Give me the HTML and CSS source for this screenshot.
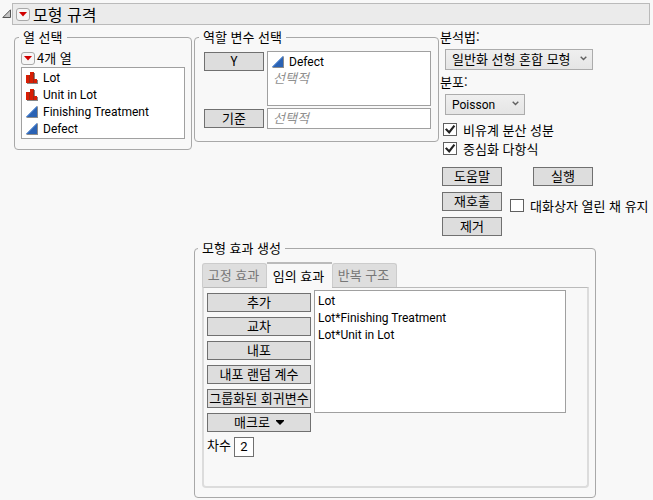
FILE: index.html
```html
<!DOCTYPE html>
<html lang="ko">
<head>
	<meta charset="UTF-8">
	<title>모형 규격</title>
	<link rel="stylesheet" href="styles.css">
</head>
<body>
	<svg class="defs" width="0" height="0">
		<symbol id="nominal" viewBox="0 0 12 12">
			<path d="M1 4H5V1H9V8H12V12H1Z" fill="#888"/>
			<path d="M0 3H4V0H8V7H11V11H0Z" fill="#d81e05"/>
			<path d="M3.500 3V11M7.500 1V11" stroke="#9c2a18"/>
		</symbol>
		<symbol id="continuous" viewBox="0 0 12 12">
			<path d="M0 12L12 0V12Z" fill="#8c8c8c"/>
			<path d="M0 11L11 0V11Z" fill="#2a62b4"/>
			<path d="M0.500 11L11 0.500" stroke="#5b8fd6" stroke-width="1"/>
		</symbol>
		<symbol id="hotspot" viewBox="0 0 14 13">
			<rect x="0.500" y="0.500" width="13" height="12" rx="2.500" fill="#f6f6f6" stroke="#a8a8a8"/>
			<path d="M3 4H11L7 8.500Z" fill="#d00000"/>
		</symbol>
		<symbol id="chevron" viewBox="0 0 7 5">
			<path d="M0.700 0.800L3.500 3.600L6.300 0.800" fill="none" stroke="#606060" stroke-width="1.400"/>
		</symbol>
	</svg>

	<header class="header">
		<svg class="disclose" viewBox="0 0 10 10"><path d="M0.800 8.500L8.500 0.800V8.500Z" fill="#c4c4c4" stroke="#555"/></svg>
		<div class="bar">
			<svg class="hotspot"><use href="#hotspot"/></svg>
			<h1 class="title">모형 규격</h1>
		</div>
	</header>

	<main class="main">
		<fieldset class="panel columns">
			<legend>열 선택</legend>
			<div class="count"><svg class="hotspot"><use href="#hotspot"/></svg>4개 열</div>
			<ul class="list">
				<li><svg class="type"><use href="#nominal"/></svg>Lot</li>
				<li><svg class="type"><use href="#nominal"/></svg>Unit in Lot</li>
				<li><svg class="type"><use href="#continuous"/></svg>Finishing Treatment</li>
				<li><svg class="type"><use href="#continuous"/></svg>Defect</li>
			</ul>
		</fieldset>

		<div class="right">
			<div class="top">
				<fieldset class="panel roles">
					<legend>역할 변수 선택</legend>
					<div class="role-grid">
						<button class="btn">Y</button>
						<ul class="list role-y">
							<li><svg class="type"><use href="#continuous"/></svg>Defect</li>
							<li class="hint">선택적</li>
						</ul>
						<button class="btn">기준</button>
						<ul class="list">
							<li class="hint">선택적</li>
						</ul>
					</div>
				</fieldset>

				<div class="side">
					<label class="caption" for="method">분석법:</label>
					<div class="select method">
						<select id="method"><option>일반화 선형 혼합 모형</option></select>
						<svg class="chevron"><use href="#chevron"/></svg>
					</div>
					<label class="caption" for="dist">분포:</label>
					<div class="select dist">
						<select id="dist"><option>Poisson</option></select>
						<svg class="chevron"><use href="#chevron"/></svg>
					</div>
					<div class="checks">
						<label class="check"><input type="checkbox" checked>비유계 분산 성분</label>
						<label class="check"><input type="checkbox" checked>중심화 다항식</label>
					</div>
					<div class="actions">
						<div class="stack">
							<button class="btn">도움말</button>
							<button class="btn">재호출</button>
							<button class="btn">제거</button>
						</div>
						<div class="run">
							<button class="btn">실행</button>
							<label class="check"><input type="checkbox">대화상자 열린 채 유지</label>
						</div>
					</div>
				</div>
			</div>

			<fieldset class="panel effects">
				<legend>모형 효과 생성</legend>
				<div class="tabs">
					<button class="tab">고정 효과</button>
					<button class="tab active">임의 효과</button>
					<button class="tab">반복 구조</button>
				</div>
				<div class="tab-body">
					<div class="tools">
						<button class="btn">추가</button>
						<button class="btn">교차</button>
						<button class="btn">내포</button>
						<button class="btn">내포 랜덤 계수</button>
						<button class="btn">그룹화된 회귀변수</button>
						<button class="btn">매크로<svg class="arrow" viewBox="0 0 8 5"><path d="M0 0H8V1L4 5L0 1Z"/></svg></button>
						<div class="degree">
							<label for="degree">차수</label>
							<input type="text" id="degree" value="2">
						</div>
					</div>
					<ul class="list terms">
						<li>Lot</li>
						<li>Lot*Finishing Treatment</li>
						<li>Lot*Unit in Lot</li>
					</ul>
				</div>
			</fieldset>
		</div>
	</main>
</body>
</html>
```
FILE: styles.css
```css
*{
	box-sizing: border-box;
}
body{
	margin: 0;padding: 3px 3px 0 2px;
	background: #f8f8f8;color: #000;
	font: 13px/16px "Noto Sans CJK KR", sans-serif;
}
button, input, select{
	margin: 0;font: inherit;color: inherit;
}
ul{
	margin: 0;padding: 0;list-style: none;
}
.defs{
	position: absolute;
}

/* title bar */
.header{
	display: flex;align-items: center;
}
.disclose{
	width: 10px;height: 10px;
}
.bar{
	flex: 1;display: flex;align-items: center;gap: 3px;
	height: 22px;padding-left: 3px;
	background: #ebebeb;border: 1px solid #bababa;
}
.title{
	margin: 0;font-size: 16px;line-height: 18px;font-weight: 400;
}
.hotspot{
	width: 14px;height: 13px;
}

.main{
	display: flex;align-items: flex-start;gap: 2px;
	padding: 4px 0 0 12px;
}
.panel{
	min-width: 0;margin: 0;
	border: 1px solid #a8a8a8;border-radius: 4px;
}
.panel legend{
	padding: 0 4px;
}
.columns{
	width: 178px;padding: 4px 6px 10px;
}
.columns legend{
	margin-left: -2px;
}
.count{
	display: flex;align-items: center;gap: 2px;height: 18px;
}
.list{
	padding: 1px 4px;
	background: #fff;border: 1px solid #a0a0a0;
	font-family: Roboto, "Noto Sans CJK KR", sans-serif;font-size: 12px;
}
.list li{
	display: flex;align-items: center;gap: 5px;
	height: 17px;line-height: 18px;
}
.type{
	width: 12px;height: 12px;
}
.list .hint{
	padding-left: 1px;
	color: #909090;font-size: 13px;font-style: italic;
}

.right{
	flex: 1;
}
.top{
	display: flex;align-items: flex-start;
}
.roles{
	width: 245px;padding: 6px 7px 12px 9px;
}
.roles legend{
	margin-left: -5px;
}
.role-grid{
	display: grid;grid-template-columns: 60px 1fr;gap: 2px 3px;
}
.role-grid .btn{
	margin-top: 1px;
}
.role-y{
	height: 55px;
}
.btn{
	width: 60px;height: 19px;padding: 0 0 1px;
	background: #ddd;border: 1px solid #707070;
	line-height: 16px;white-space: nowrap;
}

.side{
	flex: 1;
}
.caption{
	display: block;padding-left: 1px;
}
.select{
	position: relative;height: 21px;margin: 4px 0 4px 6px;
}
.method{
	width: 148px;
}
.dist{
	width: 80px;
}
.select select{
	appearance: none;
	width: 100%;height: 100%;padding: 0 6px 1px;
	background: linear-gradient(#efefef, #e5e5e5);border: 1px solid #acacac;border-radius: 0;
	line-height: 16px;
}
.dist select{
	padding-bottom: 0;
	font-family: Roboto, sans-serif;font-size: 12px;
}
.chevron{
	position: absolute;right: 6px;top: 7px;
	width: 7px;height: 5px;pointer-events: none;
}
.check{
	display: flex;align-items: center;gap: 6px;
	height: 19px;white-space: nowrap;
}
.check input{
	appearance: none;
	width: 14px;height: 13px;
	background: #fff;border: 1px solid #606060;
}
.check input:checked::after{
	content: "";display: block;height: 11px;
	background: #222;
	clip-path: polygon(8% 50%, 22% 38%, 42% 62%, 80% 8%, 94% 20%, 44% 90%);
}
.checks{
	padding: 1px 0 0 4px;
}
.actions{
	display: flex;gap: 8px;
	padding: 9px 0 0 3px;
}
.stack{
	display: flex;flex-direction: column;gap: 6px;
}
.run .btn{
	display: block;margin: 0 0 10px 23px;
}

/* model effects */
.effects{
	width: 402px;margin-top: 4px;padding: 6px 6px 9px 7px;
}
.effects legend{
	margin-left: -4px;
}
.tabs{
	display: flex;align-items: flex-end;
}
.tab{
	width: 65px;height: 24px;padding: 0 2px 1px 0;
	background: #dedede;border: 1px solid #ccc;border-bottom: none;border-radius: 3px 3px 0 0;
	color: #777;line-height: 16px;
}
.tab.active{
	position: relative;
	height: 26px;margin-bottom: -1px;
	background: #f8f8f8;border: none;border-top: 2px solid #bbb;border-radius: 0;
	color: #000;
}
.tab-body{
	display: flex;gap: 3px;
	height: 201px;padding: 2px 21px 0 3px;
	border: 2px solid #dcdcdc;border-top: 1px solid #bbb;border-radius: 0 0 4px 4px;
}
.tools{
	display: flex;flex-direction: column;gap: 5px;
	width: 104px;padding-top: 3px;
}
.tools .btn{
	width: 100%;
}
.arrow{
	width: 8px;height: 5px;margin: 0 0 2px 6px;
}
.degree{
	display: flex;gap: 3px;
}
.degree input{
	width: 20px;height: 20px;padding: 0 0 2px;
	background: #fff;border: 1px solid #707070;
	font-family: Roboto, sans-serif;text-align: center;
}
.terms{
	flex: 1;height: 123px;padding-left: 3px;
}
```
